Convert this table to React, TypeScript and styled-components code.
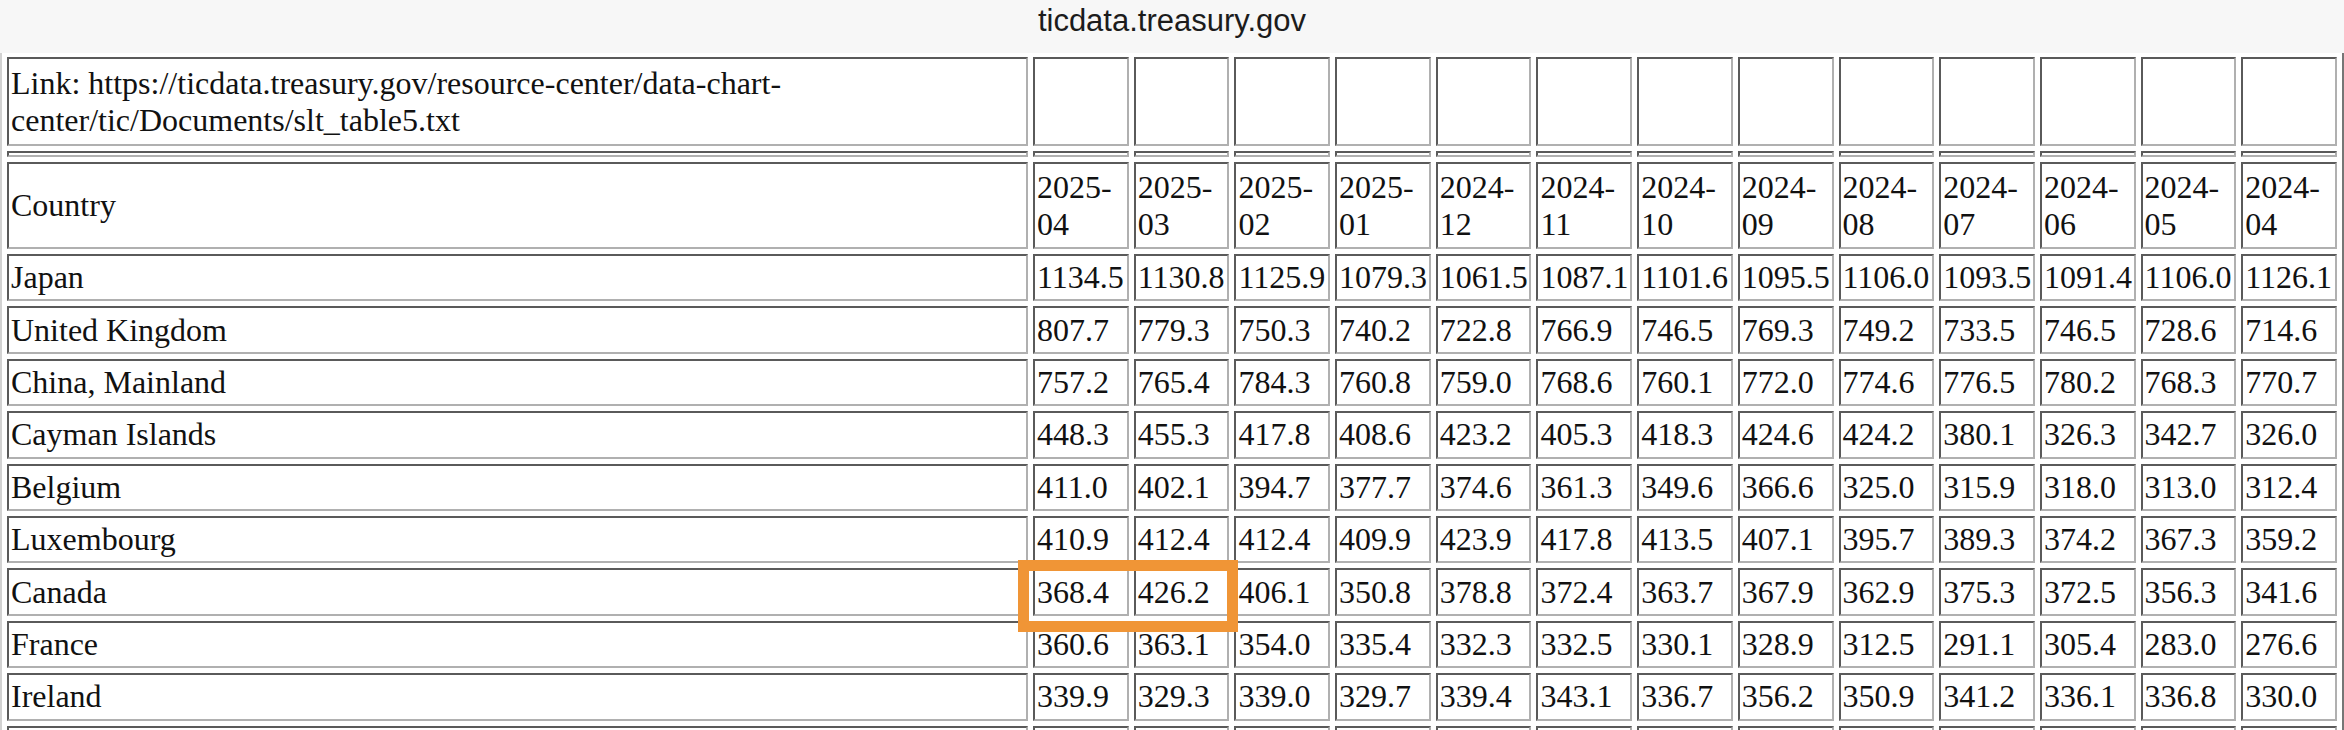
import React from "react";
import styled, { createGlobalStyle } from "styled-components";

const months = [
  "2025-04", "2025-03", "2025-02", "2025-01", "2024-12", "2024-11", "2024-10",
  "2024-09", "2024-08", "2024-07", "2024-06", "2024-05", "2024-04",
];

const rows: [string, string[]][] = [
  ["Japan", ["1134.5", "1130.8", "1125.9", "1079.3", "1061.5", "1087.1", "1101.6", "1095.5", "1106.0", "1093.5", "1091.4", "1106.0", "1126.1"]],
  ["United Kingdom", ["807.7", "779.3", "750.3", "740.2", "722.8", "766.9", "746.5", "769.3", "749.2", "733.5", "746.5", "728.6", "714.6"]],
  ["China, Mainland", ["757.2", "765.4", "784.3", "760.8", "759.0", "768.6", "760.1", "772.0", "774.6", "776.5", "780.2", "768.3", "770.7"]],
  ["Cayman Islands", ["448.3", "455.3", "417.8", "408.6", "423.2", "405.3", "418.3", "424.6", "424.2", "380.1", "326.3", "342.7", "326.0"]],
  ["Belgium", ["411.0", "402.1", "394.7", "377.7", "374.6", "361.3", "349.6", "366.6", "325.0", "315.9", "318.0", "313.0", "312.4"]],
  ["Luxembourg", ["410.9", "412.4", "412.4", "409.9", "423.9", "417.8", "413.5", "407.1", "395.7", "389.3", "374.2", "367.3", "359.2"]],
  ["Canada", ["368.4", "426.2", "406.1", "350.8", "378.8", "372.4", "363.7", "367.9", "362.9", "375.3", "372.5", "356.3", "341.6"]],
  ["France", ["360.6", "363.1", "354.0", "335.4", "332.3", "332.5", "330.1", "328.9", "312.5", "291.1", "305.4", "283.0", "276.6"]],
  ["Ireland", ["339.9", "329.3", "339.0", "329.7", "339.4", "343.1", "336.7", "356.2", "350.9", "341.2", "336.1", "336.8", "330.0"]],
];

const GlobalStyle = createGlobalStyle`
  html, body {
    margin: 0;
    padding: 0;
    background: #ffffff;
    overflow: hidden;
  }
`;

export default function App() {
  return (
    <>
      <GlobalStyle />
      <Page>
        <AddressBar>ticdata.treasury.gov</AddressBar>

        <Table>
          <colgroup>
            <col style={{ width: 1021 }} />
          </colgroup>
          <tbody>
            <Row $h={89}>
              <Cell>
                Link: https://ticdata.treasury.gov/resource-center/data-chart-center/tic/Documents/slt_table5.txt
              </Cell>
              {months.map((m) => (
                <Cell key={m} />
              ))}
            </Row>

            <Row $h={6}>
              <Cell />
              {months.map((m) => (
                <Cell key={m} />
              ))}
            </Row>

            <Row $h={87}>
              <Cell>Country</Cell>
              {months.map((m) => (
                <Cell key={m}>{m}</Cell>
              ))}
            </Row>

            {rows.map(([country, values]) => (
              <Row key={country} $h={47.4}>
                <Cell>{country}</Cell>
                {values.map((v, i) => (
                  <Cell key={i} $marked={country === "Canada" && i === 0}>
                    {v}
                    {country === "Canada" && i === 0 && <Highlight />}
                  </Cell>
                ))}
              </Row>
            ))}

            {/* next row, scrolled below the fold: only its top edge shows */}
            <Row $h={47.4}>
              <Cell />
              {months.map((m) => (
                <Cell key={m} />
              ))}
            </Row>
          </tbody>
        </Table>
      </Page>
    </>
  );
}

const Page = styled.div`
  width: 2344px;
  height: 730px;
  overflow: hidden;
`;

const AddressBar = styled.div`
  position: relative;
  z-index: 1;
  height: 53px;
  box-sizing: border-box;
  padding-top: 3px;
  display: flex;
  justify-content: center;
  align-items: flex-start;
  background: #f7f7f7;
  font-family: "Liberation Sans", Arial, sans-serif;
  font-size: 31px;
  line-height: 35px;
  color: #1c1c1c;
`;

const Table = styled.table`
  table-layout: fixed;
  width: 2344px;
  margin-top: -3px;
  border-collapse: separate;
  border-spacing: 5px;
  border: 2px solid;
  border-color: #d2d2d2 #767676 #767676 #d2d2d2;
  font-family: "Liberation Serif", "Times New Roman", serif;
  font-size: 32px;
  line-height: 37px;
  color: #111111;
`;

const Row = styled.tr<{ $h: number }>`
  height: ${({ $h }) => $h}px;
`;

const Cell = styled.td<{ $marked?: boolean }>`
  position: ${({ $marked }) => ($marked ? "relative" : "static")};
  padding: 0 1px 0 2px;
  border: 2px solid;
  border-color: #5a5a5a #b0b0b0 #b0b0b0 #5a5a5a;
  vertical-align: middle;
  text-align: left;
`;

const Highlight = styled.span`
  position: absolute;
  left: -17px;
  top: -10px;
  width: 220px;
  height: 72px;
  box-sizing: border-box;
  border: 11px solid #f09536;
  pointer-events: none;
`;
